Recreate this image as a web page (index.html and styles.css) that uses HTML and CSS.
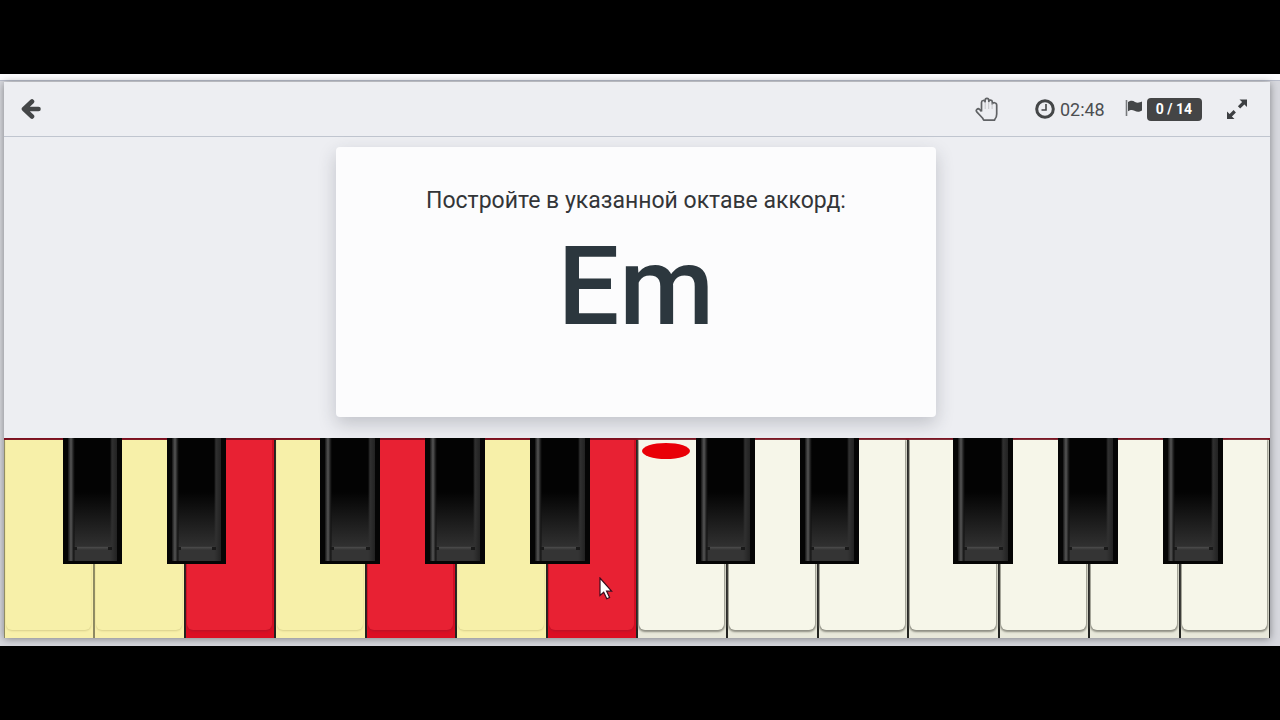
FILE: index.html
```html
<!DOCTYPE html>
<html lang="ru">
<head>
<meta charset="utf-8">
<meta name="viewport" content="width=device-width, initial-scale=1">
<title>Аккорды</title>
<link rel="stylesheet" href="styles.css">
</head>
<body>
<div class="screen">
  <main class="panel">
    <header class="toolbar">
      <button class="icon-button" type="button" aria-label="Назад">
        <svg width="20" height="22" viewBox="0 0 20 22"><path d="M11 3.500 3 11l8 7.500M3.500 11h14" fill="none" stroke="#444648" stroke-width="4.600" stroke-linecap="round" stroke-linejoin="round"/><path d="M2 11 8.500 5v12z" fill="#444648"/></svg>
      </button>
      <div class="tools">
        <button class="icon-button hand" type="button" aria-label="Поднять руку">
          <svg width="24" height="26" viewBox="0 0 24 26"><path d="M6.500 15.500V6.500c0-2.600 3.400-2.600 3.600-.6V4.500c0-2.800 3.700-2.800 3.700 0v1c.3-2 3.500-1.900 3.500.5v2c.3-2 4.400-1.800 4.400 1.200V18c0 2.700-.6 3.800-1.700 5l-.5 1.200H8.700L7.500 22 2 16.200c-2-2.400.9-4.500 2.700-2.700l1.800 2" fill="none" stroke="#606265" stroke-width="1.700" stroke-linejoin="round"/><path d="M10.200 6.500V13M13.700 6V13M17.100 7.500V13" stroke="#c4c5c9" stroke-width="1" fill="none"/></svg>
        </button>
        <div class="timer">
          <svg width="20" height="20" viewBox="0 0 20 20"><circle cx="10" cy="10" r="8.300" fill="none" stroke="#444648" stroke-width="3"/><path d="M11 5v6H6.500" fill="none" stroke="#444648" stroke-width="1.600"/></svg>
          <span>02:48</span>
        </div>
        <div class="score">
          <svg width="18" height="20" viewBox="0 0 18 20"><path d="M1.500 1v16" stroke="#77797c" stroke-width="1.600"/><path d="M3 3c3-2 5-1.500 7 0 2.500 1.300 4.500.6 7-.5v9c-3 1.700-5 1.500-7.500.2C7 10.400 5.500 10.700 3 12.200z" fill="#444648"/></svg>
          <span class="badge">0 / 14</span>
        </div>
        <button class="icon-button" type="button" aria-label="Во весь экран">
          <svg width="22" height="22" viewBox="0 0 22 22"><path d="M13.500 1.500H21V9l-2.600-2.600-4.200 4.200-2.300-2.300 4.200-4.200zM1 13.500l2.600 2.600 4-4 2.300 2.300-4 4L8.500 21H1z" fill="#3d3f42"/></svg>
        </button>
      </div>
    </header>
    <section class="exercise">
      <div class="card">
        <p class="task">Постройте в указанной октаве аккорд:</p>
        <h1 class="chord">Em</h1>
      </div>
    </section>
    <section class="piano" aria-label="Клавиатура">
      <div class="key yellow"><button class="white" type="button" aria-label="До"></button><button class="black c" type="button" aria-label="До диез"></button></div>
      <div class="key yellow"><button class="white" type="button" aria-label="Ре"></button><button class="black d" type="button" aria-label="Ре диез"></button></div>
      <div class="key red"><button class="white" type="button" aria-label="Ми"></button></div>
      <div class="key yellow"><button class="white" type="button" aria-label="Фа"></button><button class="black f" type="button" aria-label="Фа диез"></button></div>
      <div class="key red"><button class="white" type="button" aria-label="Соль"></button><button class="black g" type="button" aria-label="Соль диез"></button></div>
      <div class="key yellow"><button class="white" type="button" aria-label="Ля"></button><button class="black a" type="button" aria-label="Ля диез"></button></div>
      <div class="key red"><button class="white" type="button" aria-label="Си"></button>
        <svg class="pointer" width="14" height="24" viewBox="0 0 14 24"><path d="M1 1v17.500l3.700-3.300 3.100 6.600 2.800-1.300-3-6.300h5z" fill="#fff" stroke="#3a0a1c" stroke-width="1.200"/></svg>
      </div>
      <div class="key"><button class="white" type="button" aria-label="До"></button><button class="black c" type="button" aria-label="До диез"></button><span class="marker"></span></div>
      <div class="key"><button class="white" type="button" aria-label="Ре"></button><button class="black d" type="button" aria-label="Ре диез"></button></div>
      <div class="key"><button class="white" type="button" aria-label="Ми"></button></div>
      <div class="key"><button class="white" type="button" aria-label="Фа"></button><button class="black f" type="button" aria-label="Фа диез"></button></div>
      <div class="key"><button class="white" type="button" aria-label="Соль"></button><button class="black g" type="button" aria-label="Соль диез"></button></div>
      <div class="key"><button class="white" type="button" aria-label="Ля"></button><button class="black a" type="button" aria-label="Ля диез"></button></div>
      <div class="key"><button class="white" type="button" aria-label="Си"></button></div>
    </section>
  </main>
</div>
</body>
</html>
```
FILE: styles.css
```css
* { box-sizing: border-box; }
body {
  margin: 0;
  min-height: 100vh;
  padding: 74px 0;
  display: flex;
  background: #000;
  color: #333538;
  font-family: Roboto, "Liberation Sans", sans-serif;
}
button { margin: 0; padding: 0; border: 0; background: none; cursor: pointer; }
svg { display: block; }
.screen {
  flex: 1;
  display: flex;
  padding: 2px 10px 8px 4px;
  border-top: 6px solid #fdfdff;
  background: linear-gradient(#b9bdcb 0 1px, #d7d8de 1px);
}
.panel {
  flex: 1;
  display: flex;
  flex-direction: column;
  background: #edeef2;
  box-shadow: 0 1px 8px rgba(0, 0, 0, .4);
}
.toolbar {
  display: flex;
  align-items: center;
  justify-content: space-between;
  height: 55px;
  padding: 0 22px 0 17px;
  border-bottom: 1px solid #c0c5cf;
}
.tools, .timer, .score { display: flex; align-items: center; }
.tools { gap: 20px; }
.hand { margin-right: 16px; }
.timer { gap: 5px; font-size: 18px; color: #4c4e51; }
.score { gap: 4px; }
.badge {
  padding: 0 10px 0 9px;
  border-radius: 4px;
  background: #444546;
  color: #fff;
  font-size: 14px;
  font-weight: 700;
  line-height: 23px;
}
.score + .icon-button { margin-left: 4px; }
.exercise {
  flex: 1;
  display: flex;
  justify-content: center;
  padding: 10px 16px 21px;
}
.card {
  width: 600px;
  margin-right: 2px;
  padding: 39px 20px 0;
  border-radius: 4px;
  background: #fcfcfd;
  box-shadow: 0 7px 18px rgba(40, 45, 60, .22);
  text-align: center;
}
.task { margin: 0; font-size: 23px; line-height: 30px; }
.chord { margin: 6px 0 0; color: #2c373e; font-size: 109px; font-weight: 500; line-height: 130px; }
.piano {
  display: grid;
  grid-template-columns: repeat(14, 1fr);
  height: 200px;
  border-top: 2px solid #7c1020;
}
.key { position: relative; display: flex; }
.white {
  position: relative;
  flex: 1;
  border: solid #222320;
  border-width: 0 1px;
  background: #e8e8da;
}
.white::before {
  content: "";
  position: absolute;
  inset: 0 2px 8px 1px;
  border-radius: 0 0 6px 6px;
  background: #f6f6e9;
  box-shadow: 0 1px 2px 1px #8e8e83;
}
.yellow .white { background: #f8f0aa; }
.yellow .white::before { background: #f7f0a9; box-shadow: 0 1px 2px #d8cf8b; }
.red .white { background: #dc0e23; }
.red .white::before { background: #e82133; box-shadow: 0 1px 3px #b31228; }
.yellow:first-child .white { border-color: #8d8962; }
.yellow + .yellow .white { border-left-color: #8d8962; }
.black {
  position: absolute;
  z-index: 1;
  top: -2px;
  width: 66%;
  height: 126px;
  border: solid #050505;
  border-width: 0 5px 3px;
  background: linear-gradient(90deg, #151515 0, #565656 3px, #3d3d3d 4px, #111 6px, transparent 7px calc(100% - 7px), #303030 calc(100% - 5px), #222 100%), linear-gradient(#030303 0 44%, #303030 88%, #484848 89%, #343434 91%);
}
.black::after {
  content: "";
  position: absolute;
  right: 5px;
  bottom: 11px;
  left: 5px;
  height: 3px;
  border: solid #191919;
  border-width: 0 4px;
}
.c { left: 65%; }
.d { left: 80%; }
.f { left: 50%; }
.g { left: 66%; }
.a { left: 82%; }
.marker {
  position: absolute;
  top: 3px;
  left: 6%;
  width: 53%;
  height: 16px;
  border-radius: 50%;
  background: #e90007;
}
.pointer { position: absolute; z-index: 2; top: 137px; left: 58%; }
```
